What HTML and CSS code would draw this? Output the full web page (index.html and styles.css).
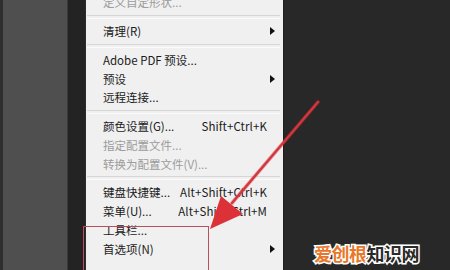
FILE: index.html
```html
<!DOCTYPE html>
<html lang="zh-CN">
<head>
    <meta charset="UTF-8">
    <title>编辑菜单</title>
    <link rel="stylesheet" href="styles.css">
</head>
<body>
    <div class="screen">
        <div class="edge"></div>
        <div class="panel"></div>
        <div class="gutter"></div>

        <div class="menu">
            <ul class="menu-list">
                <li class="item disabled"><span class="label">定义自定形状...</span></li>
                <li class="sep"></li>
                <li class="item"><span class="label">清理(R)</span><span class="sub"></span></li>
                <li class="sep"></li>
                <li class="item"><span class="label">Adobe PDF 预设...</span></li>
                <li class="item"><span class="label">预设</span><span class="sub"></span></li>
                <li class="item"><span class="label">远程连接...</span></li>
                <li class="sep"></li>
                <li class="item"><span class="label">颜色设置(G)...</span><span class="key">Shift+Ctrl+K</span></li>
                <li class="item disabled"><span class="label">指定配置文件...</span></li>
                <li class="item disabled"><span class="label">转换为配置文件(V)...</span></li>
                <li class="sep"></li>
                <li class="item"><span class="label">键盘快捷键...</span><span class="key">Alt+Shift+Ctrl+K</span></li>
                <li class="item"><span class="label">菜单(U)...</span><span class="key">Alt+Shift+Ctrl+M</span></li>
                <li class="item"><span class="label">工具栏...</span></li>
                <li class="item"><span class="label">首选项(N)</span><span class="sub"></span></li>
            </ul>
        </div>

        <div class="desk"></div>

        <!-- annotation drawn over the screenshot -->
        <div class="highlight"></div>
        <svg class="pointer" width="450" height="270" viewBox="0 0 450 270">
            <line x1="318" y1="102" x2="232" y2="203" stroke="#c9323a" stroke-width="4" stroke-linecap="round" opacity="0.35"/>
            <line x1="318" y1="102" x2="232" y2="203" stroke="#d8343c" stroke-width="2.4" stroke-linecap="round"/>
            <polygon points="210,229 221,196 243,214" fill="#dc3138"/>
        </svg>

        <div class="watermark"><span class="wm-a">爱创根</span><span class="wm-b">知识网</span></div>
    </div>
</body>
</html>
```

FILE: styles.css
```css
* {
    box-sizing: border-box;
}

body {
    margin: 0;
    background-color: #282828;
    font-family: "Noto Sans CJK SC", "Microsoft YaHei", sans-serif;
}

.screen {
    position: relative;
    display: flex;
    width: 450px;
    height: 270px;
    overflow: hidden;
}

.edge {
    width: 3px;
    background-color: #2e2e2e;
}

.panel {
    width: 65px;
    background-color: #4f4f4f;
    border-right: 1px solid #3a3a3a;
}

.gutter {
    width: 18px;
    background-color: #232323;
    border-right: 1px solid #2c2c2c;
}

.menu {
    width: 197px;
    background-color: #f0f0f0;
}

.menu-list {
    list-style: none;
    margin: -7px 0 0 0;
    padding: 0;
}

.item {
    display: flex;
    align-items: center;
    height: 18.75px;
    padding: 0 5px 0 17px;
    font-size: 11.5px;
    color: #1b1b1b;
    white-space: nowrap;
}

.item .label {
    flex: 1;
}

.item.disabled {
    color: #9c9c9c;
}

.key {
    margin-right: 11px;
    letter-spacing: 0.1px;
}

.sub {
    width: 0;
    height: 0;
    margin-right: 3px;
    border-top: 4px solid transparent;
    border-bottom: 4px solid transparent;
    border-left: 5px solid #111;
}

.sep {
    height: 10px;
    display: flex;
    align-items: center;
    padding: 0 3px 0 1px;
}

.sep::after {
    content: "";
    flex: 1;
    height: 2px;
    border-top: 1px solid #d6d6d6;
    border-bottom: 1px solid #fbfbfb;
}

.desk {
    flex: 1;
    background-color: #282828;
    border-left: 1px solid #1e1e1e;
}

.highlight {
    position: absolute;
    left: 83px;
    top: 226px;
    width: 126px;
    height: 60px;
    border: 1px solid #b5505c;
}

.pointer {
    position: absolute;
    left: 0;
    top: 0;
}

.watermark {
    position: absolute;
    left: 314px;
    top: 240px;
    font-size: 18px;
    font-weight: bold;
    letter-spacing: -0.5px;
    -webkit-text-stroke: 3px #ffffff;
    paint-order: stroke fill;
}

.wm-a {
    color: #e8772c;
}

.wm-b {
    color: #2a2a2a;
}
```
